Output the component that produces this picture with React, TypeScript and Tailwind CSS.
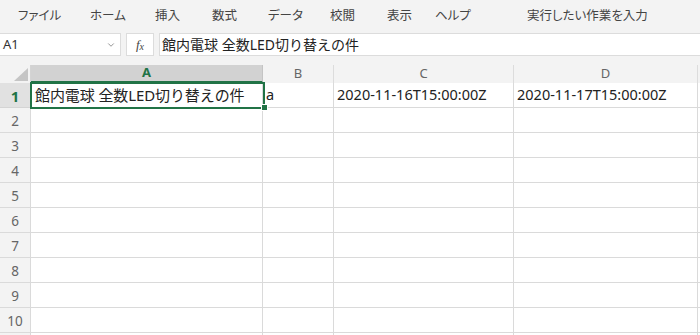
import { ChevronDown } from 'lucide-react';

const menus = [
  { label: 'ファイル', w: 'w-[72px]' },
  { label: 'ホーム', w: 'w-[65px]' },
  { label: '挿入', w: 'w-[57px]' },
  { label: '数式', w: 'w-[56px]' },
  { label: 'データ', w: 'w-[62px]' },
  { label: '校閲', w: 'w-[57px]' },
  { label: '表示', w: 'w-[48px]' },
  { label: 'ヘルプ', w: 'w-[92px]' },
  { label: '実行したい作業を入力', w: 'w-[160px]' },
];

const cols = ['A', 'B', 'C', 'D', ''];
const rows = [1, 2, 3, 4, 5, 6, 7, 8, 9, 10, 11];

const cellData: Record<string, string> = {
  B: 'a',
  C: '2020-11-16T15:00:00Z',
  D: '2020-11-17T15:00:00Z',
};

const gridCols = 'grid grid-cols-[31px_232px_71px_180px_184px_1fr]';
const jp = "font-['Noto_Sans','Noto_Sans_CJK_JP',sans-serif]";

function CornerCell() {
  return (
    <div className="relative h-[18px] bg-[#f3f3f3] border-r border-[#d4d4d4]">
      <svg className="absolute right-[2px] bottom-[2px]" width="14" height="13" viewBox="0 0 14 13">
        <polygon points="14,0 14,13 0,13" fill="#c5c5c5" />
      </svg>
    </div>
  );
}

export default function App() {
  return (
    <div className={`relative w-[700px] h-[335px] overflow-hidden bg-white ${jp}`}>
      {/* menu */}
      <div className="h-[32px] bg-[#f3f3f3] flex items-center pl-[18px] text-[12.5px] text-[#444] [font-feature-settings:'palt']">
        {menus.map((m) => (
          <span key={m.label} className={`${m.w} shrink-0 whitespace-nowrap`}>
            {m.label}
          </span>
        ))}
      </div>

      {/* formula bar */}
      <div className="h-[33px] bg-[#f3f3f3] pt-[1px] flex gap-[5px]">
        <div className="w-[121px] h-[23px] bg-white border border-l-0 border-[#dcdcdc] flex items-center justify-between pl-[3px] pr-[4px] text-[13px] text-[#333]">
          <span>A1</span>
          <ChevronDown size={10} strokeWidth={1.5} className="text-[#555]" />
        </div>
        <div className="w-[28px] h-[23px] bg-white border border-[#dcdcdc] flex items-center justify-center text-[13px] text-[#444] italic font-['Liberation_Serif',serif]">
          f<span className="text-[10px] mt-[3px]">x</span>
        </div>
        <div className="flex-1 h-[23px] bg-white border border-r-0 border-[#dcdcdc] flex items-center pl-[2px] text-[14px] text-[#222]">
          館内電球 全数LED切り替えの件
        </div>
      </div>

      {/* grid */}
      <div className={gridCols}>
        <CornerCell />
        {cols.map((c) => (
          <div
            key={'h' + c}
            className={
              c === 'A'
                ? 'h-[18px] bg-[#d2d2d2] border-b-2 border-[#217346] border-r border-r-[#c4c4c4] flex items-center justify-center text-[13px] font-bold text-[#217346]'
                : 'h-[18px] bg-[#f3f3f3] border-r border-[#dcdcdc] flex items-center justify-center text-[13px] text-[#666]'
            }
          >
            {c}
          </div>
        ))}

        {rows.map((r) => (
          <RowCells key={r} r={r} />
        ))}
      </div>

      {/* active cell */}
      <div className="absolute left-[30px] top-[82px] w-[235px] h-[27px] border-2 border-[#217346]" />
      <div className="absolute left-[261px] top-[104px] w-[7px] h-[7px] bg-[#217346] border border-white" />
    </div>
  );
}

function RowCells({ r }: { r: number }) {
  const sel = r === 1;
  return (
    <>
      <div
        className={
          sel
            ? 'h-[25px] bg-[#e1e1e1] border-r border-b border-[#d4d4d4] flex items-center justify-center pt-[2px] text-[15px] font-bold text-[#217346]'
            : 'h-[25px] bg-[#f3f3f3] border-r border-b border-[#dadada] flex items-center justify-center pt-[3px] text-[13.5px] text-[#666]'
        }
      >
        {r <= 10 ? r : ''}
      </div>
      {cols.map((c) => (
        <div
          key={c}
          className="h-[25px] border-r border-b border-[#dadada] flex items-center pl-[3px] text-[14.5px] text-[#222] whitespace-nowrap overflow-hidden"
        >
          {sel && c === 'A' ? (
            <span className="text-[15px] pl-[1px] tracking-[-0.1px]">館内電球 全数LED切り替えの件</span>
          ) : sel ? (
            cellData[c] ?? ''
          ) : (
            ''
          )}
        </div>
      ))}
    </>
  );
}
